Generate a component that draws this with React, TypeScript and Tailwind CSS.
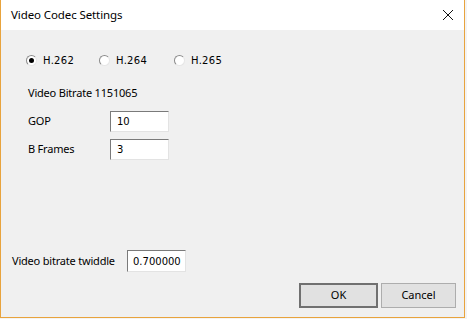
import { useState } from 'react';

type Codec = 'H.262' | 'H.264' | 'H.265';

const sunken =
  'bg-white border border-t-[#7a7a7a] border-l-[#7a7a7a] border-r-[#e3e3e3] border-b-[#e3e3e3] font-["DejaVu_Sans",sans-serif] text-[10px] text-black';

function Radio({ label, checked, onClick }: { label: Codec; checked: boolean; onClick: () => void }) {
  return (
    <button onClick={onClick} className="flex items-center gap-[6px]">
      <span className="w-[11px] h-[11px] rounded-full bg-white border border-t-[#8a8a8a] border-l-[#8a8a8a] border-r-[#e6e6e6] border-b-[#e6e6e6] flex items-center justify-center">
        {checked && <span className="w-[5px] h-[5px] rounded-full bg-black" />}
      </span>
      <span className='font-["DejaVu_Sans",sans-serif] text-[10px] text-black tracking-[0.3px]'>{label}</span>
    </button>
  );
}

export default function App() {
  const [codec, setCodec] = useState<Codec>('H.262');
  const [gop, setGop] = useState('10');
  const [bFrames, setBFrames] = useState('3');
  const [twiddle, setTwiddle] = useState('0.700000');

  return (
    <div className="w-[467px] h-[319px] bg-[#f3f3f3] overflow-hidden">
      <div className="w-[465px] h-[318px] flex flex-col border-l border-r border-b border-[#e8a33d] bg-[#f0f0f0] font-['Noto_Sans',sans-serif] text-black">
        <div className="h-[30px] bg-white flex items-center justify-between pl-[10px] pr-[9px]">
          <span className="text-[11.5px] tracking-[-0.1px]">Video Codec Settings</span>
          <svg width="12" height="12" viewBox="0 0 12 12" className="mr-[1px]">
            <path d="M1 1 L11 11 M11 1 L1 11" stroke="#111" strokeWidth="1" fill="none" />
          </svg>
        </div>

        <div className="flex-1 flex flex-col pt-[24px] pb-[9px] pr-[8px] text-[11px] tracking-[-0.2px]">
          <div className="flex items-center pl-[25px] h-[13px]">
            <div className="w-[73px]">
              <Radio label="H.262" checked={codec === 'H.262'} onClick={() => setCodec('H.262')} />
            </div>
            <div className="w-[75px]">
              <Radio label="H.264" checked={codec === 'H.264'} onClick={() => setCodec('H.264')} />
            </div>
            <Radio label="H.265" checked={codec === 'H.265'} onClick={() => setCodec('H.265')} />
          </div>

          <div className="pl-[27px] mt-[19px] leading-[14px]">Video Bitrate 1151065</div>

          <div className="flex items-center pl-[27px] mt-[11px]">
            <span className="w-[82px]">GOP</span>
            <input value={gop} onChange={(e) => setGop(e.target.value)} className={`${sunken} w-[59px] h-[21px] pl-[6px] outline-none tracking-normal`} />
          </div>
          <div className="flex items-center pl-[27px] mt-[7px]">
            <span className="w-[82px]">B Frames</span>
            <input value={bFrames} onChange={(e) => setBFrames(e.target.value)} className={`${sunken} w-[59px] h-[21px] pl-[6px] outline-none tracking-normal`} />
          </div>

          <div className="flex-1" />

          <div className="flex items-center pl-[11px]">
            <span className="w-[115px]">Video bitrate twiddle</span>
            <input value={twiddle} onChange={(e) => setTwiddle(e.target.value)} className={`${sunken} w-[59px] h-[22px] pl-[5px] outline-none tracking-normal`} />
          </div>

          <div className="flex justify-end gap-[3px] mt-[11px] tracking-normal">
            <button className="w-[79px] h-[25px] bg-[#e1e1e1] border-2 border-[#707070]">OK</button>
            <button className="w-[75px] h-[25px] bg-[#e1e1e1] border border-[#adadad]">Cancel</button>
          </div>
        </div>
      </div>
    </div>
  );
}
